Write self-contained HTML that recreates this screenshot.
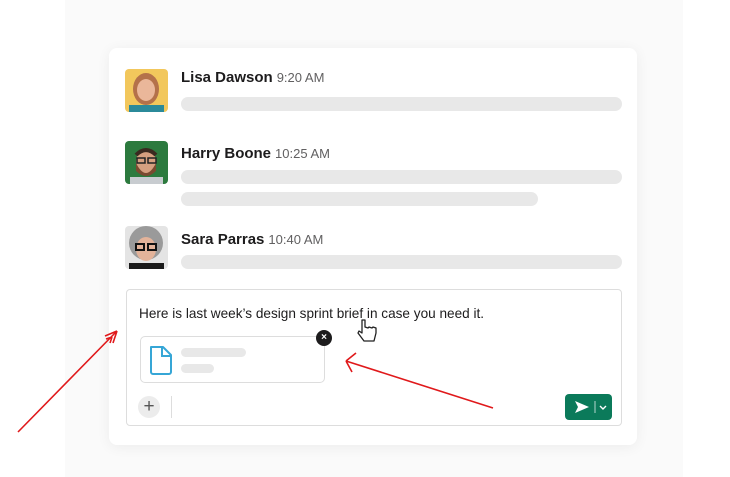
<!DOCTYPE html>
<html><head><style>
*{margin:0;padding:0;box-sizing:border-box}
body{width:730px;height:477px;background:#fff;position:relative;overflow:hidden;font-family:"Liberation Sans",sans-serif}
.bg{position:absolute;left:65px;top:0;width:618px;height:477px;background:#fafafa}
.card{position:absolute;left:109px;top:48px;width:528px;height:397px;background:#fff;border-radius:8px;box-shadow:0 2px 14px rgba(0,0,0,.06)}
.av{position:absolute;left:125px;width:43px;height:43px;border-radius:4px;overflow:hidden}
.name{position:absolute;left:181px;font-weight:bold;font-size:15px;color:#1d1c1d}
.name span{font-weight:normal;font-size:13px;color:#616061;margin-left:4px}
.bar{position:absolute;left:181px;height:14px;background:#e8e8e8;border-radius:7px}
.a{position:absolute}
</style></head><body>
<div class="bg"></div>
<div class="card"></div>
<div class="av" style="top:69px;background:#f2c75c"><svg width="43" height="43"><ellipse cx="21" cy="20" rx="13" ry="16" fill="#b4714a"/><ellipse cx="21" cy="21" rx="9" ry="11" fill="#eab79a"/><rect x="4" y="36" width="35" height="8" fill="#2b8a9a"/></svg></div>
<div class="name" style="top:69px">Lisa Dawson<span>9:20 AM</span></div>
<div class="bar" style="top:97px;width:441px"></div>
<div class="av" style="top:141px;background:#2c7a3e"><svg width="43" height="43"><ellipse cx="21" cy="21" rx="10" ry="13" fill="#d6a080"/><path d="M11 22q10 20 20 0v8q-10 10-20 0z" fill="#7a4a30"/><rect x="12" y="17" width="8" height="5" fill="none" stroke="#222" stroke-width="1.5"/><rect x="23" y="17" width="8" height="5" fill="none" stroke="#222" stroke-width="1.5"/><rect x="5" y="36" width="33" height="8" fill="#c8ccd0"/><path d="M11 14q10-10 20 0" stroke="#3a2a20" stroke-width="4" fill="none"/></svg></div>
<div class="name" style="top:145px">Harry Boone<span>10:25 AM</span></div>
<div class="bar" style="top:170px;width:441px"></div>
<div class="bar" style="top:192px;width:357px"></div>
<div class="av" style="top:226px;background:#e4e4e4"><svg width="43" height="43"><circle cx="21" cy="17" r="17" fill="#9a9a9a"/><ellipse cx="21" cy="23" rx="10" ry="12" fill="#e3b39a"/><rect x="11" y="18" width="8" height="6" fill="none" stroke="#111" stroke-width="2"/><rect x="23" y="18" width="8" height="6" fill="none" stroke="#111" stroke-width="2"/><rect x="4" y="37" width="35" height="8" fill="#1a1a1a"/></svg></div>
<div class="name" style="top:231px">Sara Parras<span>10:40 AM</span></div>
<div class="bar" style="top:255px;width:441px"></div>
<div class="a" style="left:126px;top:289px;width:496px;height:137px;border:1px solid #ddd;border-radius:4px;background:#fff"></div>
<div class="a" style="left:139px;top:306px;font-size:13.6px;color:#1d1c1d">Here is last week’s design sprint brief in case you need it.</div>
<div class="a" style="left:140px;top:336px;width:185px;height:47px;border:1px solid #ddd;border-radius:5px"></div>
<svg class="a" style="left:148px;top:344px" width="26" height="32"><path d="M3 3h12l8 8v17a2 2 0 0 1-2 2H5a2 2 0 0 1-2-2z" fill="none" stroke="#36a6d6" stroke-width="2" stroke-linejoin="round"/><path d="M14 4v8h8" fill="none" stroke="#36a6d6" stroke-width="2"/></svg>
<div class="a" style="left:181px;top:348px;width:65px;height:9px;background:#e8e8e8;border-radius:5px"></div>
<div class="a" style="left:181px;top:364px;width:33px;height:9px;background:#e8e8e8;border-radius:5px"></div>
<div class="a" style="left:316px;top:330px;width:16px;height:16px;border-radius:50%;background:#1d1c1d;color:#fff;font-size:10px;font-weight:bold;text-align:center;line-height:16px">×</div>
<div class="a" style="left:138px;top:396px;width:22px;height:22px;border-radius:50%;background:#ececec;color:#555;font-size:19px;text-align:center;line-height:21px">+</div>
<div class="a" style="left:171px;top:396px;width:1px;height:22px;background:#ddd"></div>
<div class="a" style="left:565px;top:394px;width:47px;height:26px;background:#0b7a5a;border-radius:4px"></div>
<svg class="a" style="left:565px;top:394px" width="47" height="26"><path d="M10 7l14 6-14 6 3-6z" fill="#fff"/><path d="M30 7v12" stroke="#fff" stroke-width="1" opacity=".7"/><path d="M35 12l3 3 3-3" stroke="#fff" stroke-width="1.4" fill="none"/></svg>
<svg class="a" style="left:356px;top:318px" width="24" height="26"><path d="M6 2v13l-3-2-1 2 6 8h10l2-8v-5l-3-1-1 1-3-1-1 1-3-1V2z" fill="#fff" stroke="#222" stroke-width="1.3" stroke-linejoin="round"/></svg>
<svg class="a" style="left:0;top:0" width="730" height="477"><g stroke="#e0191b" stroke-width="1.6" fill="none"><path d="M18 432L117 331M117 331l-12 5M117 331l-4 12M112 337l-6 2M112 337l-2 6M493 408L346 361M346 361l10 -8M346 361l6 11"/></g></svg>
</body></html>
